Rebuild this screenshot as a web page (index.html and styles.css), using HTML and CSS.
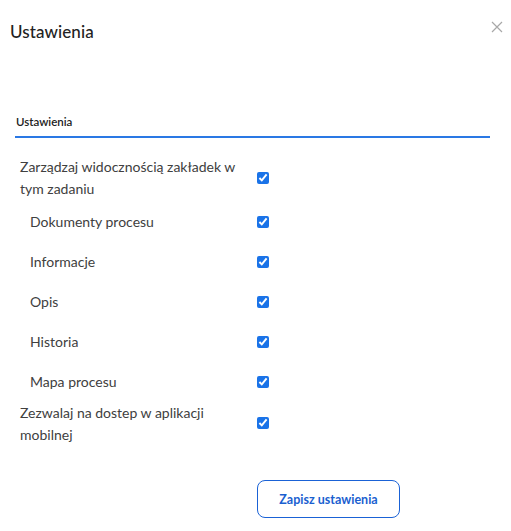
FILE: index.html
```html
<!DOCTYPE html>
<html lang="pl">
<head>
<meta charset="utf-8">
<title>Ustawienia</title>
<link rel="stylesheet" href="styles.css">
</head>
<body>
<div class="dialog">
  <header class="dialog-header">
    <h1 class="dialog-title">Ustawienia</h1>
    <button class="close" aria-label="Zamknij">
      <svg width="12" height="12" viewBox="0 0 12 12"><path d="M1 1L11 11M11 1L1 11" stroke="#a8a8a8" stroke-width="1.2" fill="none"/></svg>
    </button>
  </header>
  <div class="tabs">
    <div class="tab">Ustawienia</div>
  </div>
  <div class="list">
    <label class="row double first"><span class="label">Zarządzaj widocznością zakładek w tym zadaniu</span><input type="checkbox" checked></label>
    <label class="row sub"><span class="label">Dokumenty procesu</span><input type="checkbox" checked></label>
    <label class="row sub"><span class="label">Informacje</span><input type="checkbox" checked></label>
    <label class="row sub"><span class="label">Opis</span><input type="checkbox" checked></label>
    <label class="row sub"><span class="label">Historia</span><input type="checkbox" checked></label>
    <label class="row sub"><span class="label">Mapa procesu</span><input type="checkbox" checked></label>
    <label class="row double"><span class="label">Zezwalaj na dostep w aplikacji mobilnej</span><input type="checkbox" checked></label>
  </div>
  <div class="actions">
    <button class="save">Zapisz ustawienia</button>
  </div>
</div>
</body>
</html>
```
FILE: styles.css
```css
* { box-sizing: border-box; }
html, body { margin: 0; padding: 0; background: #fff; }
body { font-family: Lato, "Open Sans", sans-serif; color: #404040; }
.dialog { width: 511px; height: 531px; }
.dialog-header { display: flex; align-items: center; justify-content: space-between; height: 62px; padding: 0 7px 0 10px; }
.dialog-title { margin: 0; font-size: 17px; font-weight: 500; color: #222; letter-spacing: 0.1px; }
.close { border: 0; background: none; padding: 0; width: 14px; height: 14px; display: flex; align-items: center; justify-content: center; margin-top: -8px; }
.tabs { margin: 53px 21px 0 15px; border-bottom: 2px solid #2a78e4; }
.tab { padding: 0 0 8px 1px; font-size: 11.5px; font-weight: 600; color: #222; }
.list { padding: 18px 0 0 20px; }
.row { display: flex; align-items: center; width: 260px; }
.row .label { width: 235px; font-size: 14px; line-height: 22px; }
.row.double { height: 44px; }
.row.sub { height: 40px; }
.row.sub .label { padding-left: 10px; }
.row input { margin: 0 0 0 2px; width: 12px; height: 12px; accent-color: #1a73e8; }
.row.double input { margin-top: -2px; }
.row.double.first { height: 46px; align-items: flex-start; }
.row.double.first input { margin-top: 16px; }
.actions { padding: 34px 0 0 257px; }
.save { width: 143px; height: 38px; border: 1px solid #1a62d6; border-radius: 8px; background: #fff; color: #1a5fd0; font-family: Lato, "Open Sans", sans-serif; font-size: 12.5px; font-weight: 700; }
```
